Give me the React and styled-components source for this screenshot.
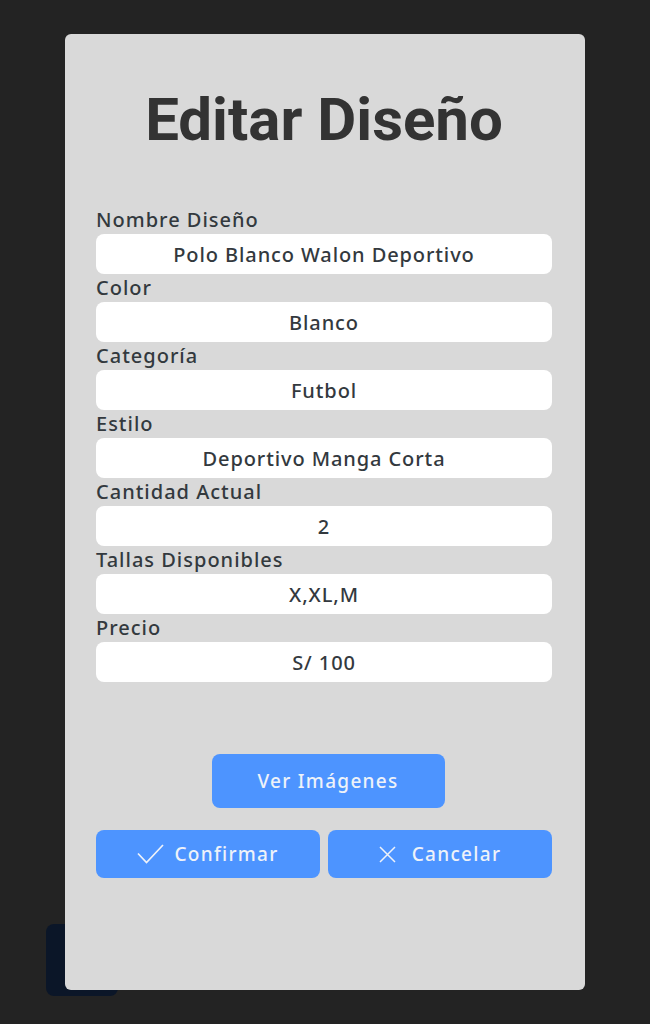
import styled, { createGlobalStyle } from 'styled-components'

const GlobalStyle = createGlobalStyle`
  body {
    margin: 0;
    background-color: #232323;
    font-family: 'Noto Sans', sans-serif;
  }
`

const Page = styled.div`
  height: 1024px;
  display: flex;
  flex-direction: column;
  justify-content: flex-end;
  padding: 0 0 28px 46px;
  box-sizing: border-box;
`

const FloatButton = styled.div`
  width: 72px;
  height: 72px;
  border-radius: 8px;
  background-color: #0b1628;
`

const Overlay = styled.div`
  position: fixed;
  inset: 0;
  display: flex;
  align-items: center;
  justify-content: center;
`

const Modal = styled.div`
  width: 520px;
  height: 956px;
  box-sizing: border-box;
  background-color: #d9d9d9;
  border-radius: 6px;
  padding: 48px 33px 0 31px;
  display: flex;
  flex-direction: column;
`

const Title = styled.h1`
  margin: 0 0 48px;
  font-family: Roboto, sans-serif;
  font-weight: 700;
  font-size: 60px;
  line-height: 76px;
  color: #333333;
  text-align: center;
`

const Form = styled.form`
  display: flex;
  flex-direction: column;
`

const Label = styled.label`
  display: flex;
  flex-direction: column;
  font-size: 20px;
  font-weight: 500;
  letter-spacing: 1px;
  line-height: 28px;
  color: #33393e;
`

const Input = styled.input`
  height: 40px;
  border: none;
  border-radius: 8px;
  background-color: #ffffff;
  text-align: center;
  font-family: 'Noto Sans', sans-serif;
  font-size: 20px;
  font-weight: 500;
  letter-spacing: 0.9px;
  color: #33393e;
  padding: 0;
  outline: none;
`

const Actions = styled.div`
  margin-top: 72px;
  display: flex;
  flex-direction: column;
  align-items: center;
  gap: 22px;
`

const Button = styled.button`
  display: flex;
  align-items: center;
  justify-content: center;
  gap: ${(props) => props.$gap || 10}px;
  width: ${(props) => props.$width || '100%'};
  height: ${(props) => props.$height || 48}px;
  margin-left: ${(props) => props.$shift || 0}px;
  border: none;
  border-radius: 8px;
  background-color: #4d94ff;
  color: #eef2f9;
  font-family: 'Noto Sans', sans-serif;
  font-size: 19px;
  font-weight: 500;
  letter-spacing: 1.3px;
  cursor: pointer;
`

const ButtonRow = styled.div`
  align-self: stretch;
  display: grid;
  grid-template-columns: 1fr 1fr;
  gap: 8px;
`

const CheckIcon = () => (
  <svg width="27" height="20" viewBox="0 0 27 20" fill="none">
    <path d="M1 9.5 L9.5 18.5 L26 1" stroke="#eef2f9" strokeWidth="1.7" />
  </svg>
)

const CloseIcon = () => (
  <svg width="17" height="17" viewBox="0 0 17 17" fill="none">
    <path d="M1 1 L16 16 M16 1 L1 16" stroke="#eef2f9" strokeWidth="1.5" />
  </svg>
)

const fields = [
  { label: 'Nombre Diseño', value: 'Polo Blanco Walon Deportivo' },
  { label: 'Color', value: 'Blanco' },
  { label: 'Categoría', value: 'Futbol' },
  { label: 'Estilo', value: 'Deportivo Manga Corta' },
  { label: 'Cantidad Actual', value: '2' },
  { label: 'Tallas Disponibles', value: 'X,XL,M' },
  { label: 'Precio', value: 'S/ 100' }
]

export default function App() {
  return (
    <>
      <GlobalStyle />
      <Page>
        <FloatButton />
      </Page>
      <Overlay>
        <Modal>
          <Title>Editar Diseño</Title>
          <Form>
            {fields.map((field) => (
              <Label key={field.label}>
                {field.label}
                <Input defaultValue={field.value} />
              </Label>
            ))}
          </Form>
          <Actions>
            <Button type="button" $width="233px" $height={54} $shift={8}>
              Ver Imágenes
            </Button>
            <ButtonRow>
              <Button type="button">
                <CheckIcon />
                Confirmar
              </Button>
              <Button type="button" $gap={16}>
                <CloseIcon />
                Cancelar
              </Button>
            </ButtonRow>
          </Actions>
        </Modal>
      </Overlay>
    </>
  )
}
